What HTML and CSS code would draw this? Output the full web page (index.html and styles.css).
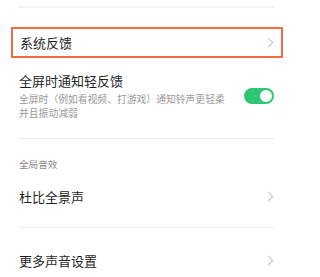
FILE: index.html
```html
<!DOCTYPE html>
<html lang="zh">
<head>
<meta charset="utf-8">
<link rel="stylesheet" href="styles.css">
</head>
<body>
<div class="page">
  <div class="rule rule-top"></div>
  <div class="row row-highlight">
    <span class="label">系统反馈</span>
    <svg class="chev" width="7" height="11" viewBox="0 0 7 11"><polyline points="1,0.8 5.8,5.5 1,10.2" fill="none" stroke="#c6c6c6" stroke-width="1.1"/></svg>
  </div>
  <div class="row row-toggle">
    <div class="texts">
      <div class="label">全屏时通知轻反馈</div>
      <div class="desc">全屏时（例如看视频、打游戏）通知铃声更轻柔<br>并且振动减弱</div>
    </div>
    <span class="switch"></span>
  </div>
  <div class="rule"></div>
  <div class="section">全局音效</div>
  <div class="row row-dolby">
    <span class="label">杜比全景声</span>
    <svg class="chev" width="7" height="11" viewBox="0 0 7 11"><polyline points="1,0.8 5.8,5.5 1,10.2" fill="none" stroke="#c6c6c6" stroke-width="1.1"/></svg>
  </div>
  <div class="rule"></div>
  <div class="row row-more">
    <span class="label">更多声音设置</span>
    <svg class="chev" width="7" height="11" viewBox="0 0 7 11"><polyline points="1,0.8 5.8,5.5 1,10.2" fill="none" stroke="#c6c6c6" stroke-width="1.1"/></svg>
  </div>
</div>
</body>
</html>
```
FILE: styles.css
```css
html, body {
  margin: 0;
  padding: 0;
  background: #ffffff;
}
body {
  font-family: "Noto Sans CJK SC", "Noto Sans", sans-serif;
  color: #1f1f1f;
  overflow: hidden;
}
.page {
  width: 256px;
  padding: 0 25px 0 18px;
}
.rule {
  height: 1px;
  background: #ececec;
}
.rule-top {
  margin-top: 6px;
  height: 2px;
  background: #f3f3f3;
}
.row {
  display: flex;
  align-items: center;
  justify-content: space-between;
}
.label {
  font-size: 13px;
  line-height: 17px;
  padding-left: 1px;
}
.chev {
  display: block;
  flex: none;
}
.row-highlight {
  margin: 19px -9px 0 -7px;
  height: 27px;
  padding: 0 7px 0 6px;
  border: 2px solid #f36c3f;
}
.row-toggle {
  margin-top: 14px;
  padding-bottom: 18px;
}
.desc {
  margin-top: 3px;
  font-size: 9.8px;
  line-height: 14px;
  color: #9a9a9a;
  padding-left: 1px;
}
.switch {
  position: relative;
  flex: none;
  width: 30px;
  height: 16px;
  border-radius: 8px;
  background: #2fc573;
}
.switch::after {
  content: "";
  position: absolute;
  right: 2px;
  top: 2px;
  width: 12px;
  height: 12px;
  border-radius: 50%;
  background: #ffffff;
}
.section {
  margin-top: 18px;
  font-size: 9.6px;
  line-height: 14px;
  color: #8a8a8a;
  padding-left: 1px;
}
.row-dolby {
  padding: 17px 0 22px;
}
.row-more {
  padding: 24px 0 20px;
}
```
